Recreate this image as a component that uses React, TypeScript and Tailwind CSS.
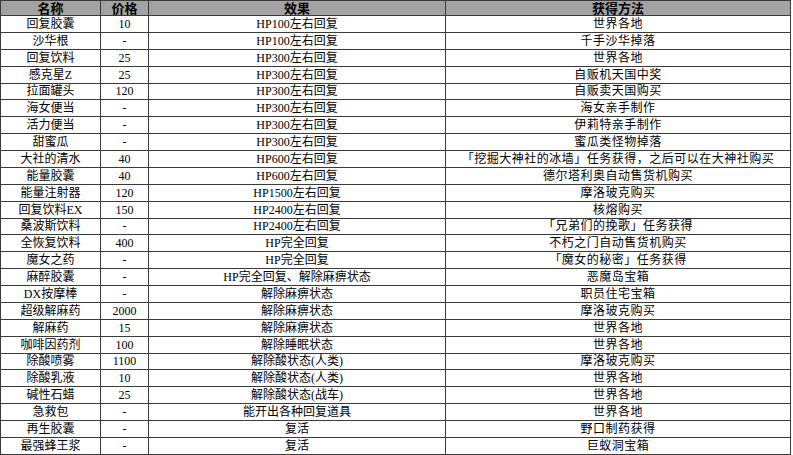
const rows: [string, string, string, string][] = [
  ["回复胶囊", "10", "HP100左右回复", "世界各地"],
  ["沙华根", "-", "HP100左右回复", "千手沙华掉落"],
  ["回复饮料", "25", "HP300左右回复", "世界各地"],
  ["感克星Z", "25", "HP300左右回复", "自贩机天国中奖"],
  ["拉面罐头", "120", "HP300左右回复", "自贩卖天国购买"],
  ["海女便当", "-", "HP300左右回复", "海女亲手制作"],
  ["活力便当", "-", "HP300左右回复", "伊莉特亲手制作"],
  ["甜蜜瓜", "-", "HP300左右回复", "蜜瓜类怪物掉落"],
  ["大社的清水", "40", "HP600左右回复", "「挖掘大神社的冰墙」任务获得，之后可以在大神社购买"],
  ["能量胶囊", "40", "HP600左右回复", "德尔塔利奥自动售货机购买"],
  ["能量注射器", "120", "HP1500左右回复", "摩洛玻克购买"],
  ["回复饮料EX", "150", "HP2400左右回复", "核熔购买"],
  ["桑波斯饮料", "-", "HP2400左右回复", "「兄弟们的挽歌」任务获得"],
  ["全恢复饮料", "400", "HP完全回复", "不朽之门自动售货机购买"],
  ["魔女之药", "-", "HP完全回复", "「魔女的秘密」任务获得"],
  ["麻醉胶囊", "-", "HP完全回复、解除麻痹状态", "恶魔岛宝箱"],
  ["DX按摩棒", "-", "解除麻痹状态", "职员住宅宝箱"],
  ["超级解麻药", "2000", "解除麻痹状态", "摩洛玻克购买"],
  ["解麻药", "15", "解除麻痹状态", "世界各地"],
  ["咖啡因药剂", "100", "解除睡眠状态", "世界各地"],
  ["除酸喷雾", "1100", "解除酸状态(人类)", "摩洛玻克购买"],
  ["除酸乳液", "10", "解除酸状态(人类)", "世界各地"],
  ["碱性石蜡", "25", "解除酸状态(战车)", "世界各地"],
  ["急救包", "-", "能开出各种回复道具", "世界各地"],
  ["再生胶囊", "-", "复活", "野口制药获得"],
  ["最强蜂王浆", "-", "复活", "巨蚁洞宝箱"],
];

const cell = "border border-[#3a3a3a] text-center align-middle p-0 leading-none";

const App = () => {
  return (
    <div className="w-[793px] h-[455px] bg-white overflow-hidden">
      <table
        className="w-[791px] border-collapse table-fixed text-[12px] text-black"
        style={{ fontFamily: '"Liberation Serif", "Noto Sans CJK SC", serif' }}
      >
        <colgroup>
          <col className="w-[100px]" />
          <col className="w-[48px]" />
          <col className="w-[297px]" />
          <col />
        </colgroup>
        <thead>
          <tr className="h-[15px] bg-[#a3a3a3] font-bold text-[13px]">
            <th className={cell}>名称</th>
            <th className={cell}>价格</th>
            <th className={cell}>效果</th>
            <th className={cell}>获得方法</th>
          </tr>
        </thead>
        <tbody>
          {rows.map((r) => (
            <tr key={r[0]} className="h-[16.88px]">
              <td className={cell}>{r[0]}</td>
              <td className={cell}>{r[1]}</td>
              <td className={cell}>{r[2]}</td>
              <td className={`${cell} tracking-[0.5px]`}>{r[3]}</td>
            </tr>
          ))}
        </tbody>
      </table>
    </div>
  );
};

export default App;
